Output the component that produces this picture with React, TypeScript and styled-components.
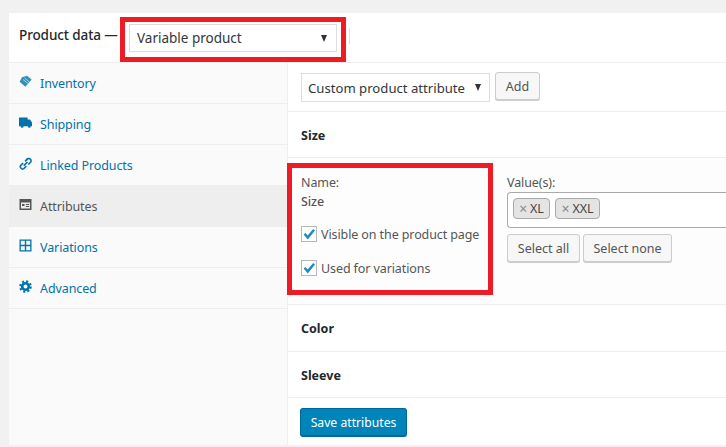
import React from "react";
import styled, { createGlobalStyle } from "styled-components";

const Global = createGlobalStyle`
  html, body { margin: 0; padding: 0; background: #f1f1f1; }
  body { width: 726px; height: 447px; overflow: hidden; font-family: "Noto Sans", "Open Sans", sans-serif; font-size: 13px; color: #32373c; }
  * { box-sizing: border-box; }
`;

const Page = styled.div`
  width: 726px;
  height: 447px;
  padding: 13px 0 2px 9px;
`;

const Panel = styled.div`
  height: 432px;
  background: #fff;
  display: flex;
  flex-direction: column;
  overflow: hidden;
`;

const Header = styled.div`
  height: 50px;
  flex: none;
  display: flex;
  align-items: center;
  padding-left: 10px;
  border-bottom: 1px solid #eee;
`;

const HeaderLabel = styled.span`
  font-size: 13.5px;
  font-weight: 500;
  color: #23282d;
  letter-spacing: -0.1px;
  width: 101px;
  white-space: nowrap;
  margin-top: -5px;
`;

const RedFrame = styled.div`
  border: 5px solid #ed1c24;
`;

const HeaderFrame = styled(RedFrame)`
  width: 226px;
  height: 45px;
  flex: none;
  align-self: flex-start;
  margin-top: 4px;
  padding: 2px 4px 5px 4px;
`;

const FakeSelect = styled.div`
  height: 100%;
  border: 1px solid #ddd;
  background: #fff;
  display: flex;
  align-items: center;
  justify-content: space-between;
  white-space: nowrap;
  color: #32373c;
`;

const HeaderSelect = styled(FakeSelect)`
  padding: 0 9px 0 7px;
  font-size: 13.5px;
`;

const Arrow = styled.span`
  width: 0;
  height: 0;
  border-left: 3.5px solid transparent;
  border-right: 3.5px solid transparent;
  border-top: 7px solid #333;
`;

const Divider = styled.span`
  width: 1px;
  height: 16px;
  background: #ddd;
  margin-left: 3px;
  margin-top: -3px;
`;

const Body = styled.div`
  flex: 1;
  display: flex;
  min-height: 0;
`;

const Sidebar = styled.nav`
  width: 279px;
  flex: none;
  background: #fafafa;
  border-right: 1px solid #eee;
`;

const Tab = styled.div<{ $active?: boolean }>`
  height: 41px;
  display: flex;
  align-items: center;
  padding: 1px 0 0 10px;
  gap: 8px;
  border-bottom: 1px solid #eee;
  background: ${(p) => (p.$active ? "#eee" : "transparent")};
  color: ${(p) => (p.$active ? "#555" : "#0073aa")};
  font-size: 12.5px;
  letter-spacing: -0.1px;
`;

const TabIcon = styled.svg`
  width: 13px;
  height: 13px;
  flex: none;
  fill: currentColor;
  margin-top: -4px;
`;

const Main = styled.div`
  flex: 1;
  min-width: 0;
  display: flex;
  flex-direction: column;
`;

const Toolbar = styled.div`
  height: 49px;
  flex: none;
  display: flex;
  align-items: flex-start;
  gap: 5px;
  padding: 10px 0 0 13px;
  border-bottom: 1px solid #eee;
`;

const AttrSelect = styled(FakeSelect)`
  width: 189px;
  height: 29px;
  padding: 0 8px 0 6px;
  font-size: 13.15px;
`;

const Button = styled.button<{ $w: number }>`
  font: inherit;
  font-size: 12.5px;
  color: #555;
  background: #f7f7f7;
  border: 1px solid #ccc;
  border-radius: 3px;
  box-shadow: 0 1px 0 #ccc;
  padding: 0;
  width: ${(p) => p.$w}px;
  height: 28px;
  white-space: nowrap;
`;

const AddButton = styled(Button)`
  margin-top: -1px;
`;

const Attr = styled.div<{ $h: number; $pt?: number }>`
  height: ${(p) => p.$h}px;
  flex: none;
  display: flex;
  align-items: center;
  padding: ${(p) => p.$pt ?? 0}px 0 0 13px;
  border-bottom: 1px solid #eee;
  font-weight: 700;
  font-size: 12.5px;
  color: #23282d;
`;

const Expanded = styled.div`
  height: 147px;
  flex: none;
  background: #fdfdfd;
  border-bottom: 1px solid #eee;
  display: flex;
  padding-top: 5px;
`;

const NameFrame = styled(RedFrame)`
  width: 206px;
  height: 132px;
  flex: none;
  margin-left: -1px;
  padding: 5px 0 0 9px;
  font-size: 12.5px;
  color: #555;
  letter-spacing: -0.1px;
  display: flex;
  flex-direction: column;
`;

const NameLabel = styled.div`
  height: 19px;
  line-height: 19px;
`;

const NameValue = styled.div`
  height: 19px;
  line-height: 19px;
  font-weight: 500;
  margin-bottom: 15px;
`;

const CheckRow = styled.label`
  display: flex;
  align-items: center;
  gap: 4px;
  height: 16px;
  margin-bottom: 18px;
  white-space: nowrap;
`;

const Box = styled.span`
  width: 16px;
  height: 16px;
  border: 1px solid #b4b9be;
  background: #fff;
  display: flex;
  align-items: center;
  justify-content: center;
  flex: none;
`;

const ValuesCol = styled.div`
  flex: 1;
  min-width: 0;
  padding: 12px 0 0 14px;
  font-size: 12.5px;
  color: #555;
`;

const ValuesLabel = styled.div`
  height: 16px;
  line-height: 16px;
  margin-bottom: 1px;
  letter-spacing: -0.1px;
`;

const TagField = styled.div`
  height: 36px;
  width: 240px;
  border: 1px solid #aaa;
  border-right: none;
  border-radius: 4px 0 0 4px;
  background: #fff;
  display: flex;
  align-items: flex-start;
  gap: 5px;
  padding: 5px 0 0 5px;
`;

const Tag = styled.span<{ $w: number }>`
  width: ${(p) => p.$w}px;
  height: 21px;
  display: flex;
  align-items: center;
  justify-content: center;
  gap: 3px;
  background: #e4e4e4;
  border: 1px solid #aaa;
  border-radius: 4px;
  color: #444;
  font-size: 12.5px;
  letter-spacing: -0.1px;
`;

const TagX = styled.span`
  color: #888;
  font-size: 14px;
`;

const ValueButtons = styled.div`
  display: flex;
  gap: 3px;
  margin-top: 6px;
`;

const Footer = styled.div`
  flex: 1;
  padding: 10px 0 0 12px;
`;

const SaveButton = styled.button`
  font: inherit;
  font-size: 12.2px;
  color: #fff;
  background: #0085ba;
  border: 1px solid #006799;
  border-bottom-width: 2px;
  border-radius: 3px;
  width: 107px;
  height: 29px;
  padding: 0;
  white-space: nowrap;
`;

const Check = () => (
  <svg width="14" height="13" viewBox="0 0 14 13">
    <path d="M1.6 6.6 L3.6 5 L5.6 7.6 L11.2 1 L13 2.4 L5.8 11.6 Z" fill="#1e8cbe" />
  </svg>
);

const icons: Record<string, React.ReactNode> = {
  Inventory: (
    <>
      <path d="M8 .8 12.6 4.400 6.400 11.800.6 6.800 3 2.200Z" opacity="0.8" />
      <path d="M4 4.500 8.800 8.400M5.500 3 10.200 6.800" stroke="#fff" strokeWidth="0.6" fill="none" />
    </>
  ),
  Shipping: (
    <path d="M0 1.500h8.600v2h2.400L13 6.500v3.700h-1.200a1.500 1.500 0 0 1-3 0H4.600a1.500 1.500 0 0 1-3 0H0Z" />
  ),
  "Linked Products": (
    <path fillRule="evenodd" d="M9.200.800a3 3 0 0 1 2.900 4.900L9.800 8 8.700 6.900l2.200-2.200a1.400 1.400 0 0 0-2-2L6.700 4.900 5.600 3.800 7.400 1.600A3 3 0 0 1 9.200.800ZM3.600 5.400 4.700 6.500 2.600 8.700a1.400 1.400 0 0 0 2 2L6.800 8.500 7.900 9.600 5.800 11.800A3 3 0 0 1 1.500 7.600ZM8 4.400 9.100 5.500 5.300 9.200 4.200 8.100Z" />
  ),
  Attributes: (
    <path fillRule="evenodd" d="M.5 1h12v11H.5Zm1.500 3.500v6h9v-6ZM3 6h2.500v2H3Zm3.800 0h3.400v1H6.800Zm0 2h3.400v1H6.800Z" />
  ),
  Variations: (
    <path fillRule="evenodd" d="M.5.500h12v12H.5Zm1.300 1.300v4h4v-4Zm5.400 0v4h4v-4ZM1.800 7.200v4h4v-4Zm5.400 0v4h4v-4Z" />
  ),
  Advanced: (
    <g fill="none" stroke="currentColor">
      <circle cx="6.500" cy="6.500" r="3.300" strokeWidth="2.600" />
      <circle cx="6.500" cy="6.500" r="5.300" strokeWidth="2" strokeDasharray="2.100 2.060" />
    </g>
  ),
};

const tabs = ["Inventory", "Shipping", "Linked Products", "Attributes", "Variations", "Advanced"];

export default function App() {
  return (
    <Page>
      <Global />
      <Panel>
        <Header>
          <HeaderLabel>Product data —</HeaderLabel>
          <HeaderFrame>
            <HeaderSelect>
              Variable product
              <Arrow />
            </HeaderSelect>
          </HeaderFrame>
          <Divider />
        </Header>
        <Body>
          <Sidebar>
            {tabs.map((t) => (
              <Tab key={t} $active={t === "Attributes"}>
                <TabIcon viewBox="0 0 13 13">{icons[t]}</TabIcon>
                {t}
              </Tab>
            ))}
          </Sidebar>
          <Main>
            <Toolbar>
              <AttrSelect>
                Custom product attribute
                <Arrow />
              </AttrSelect>
              <AddButton $w={45}>Add</AddButton>
            </Toolbar>
            <Attr $h={46} $pt={1}>Size</Attr>
            <Expanded>
              <NameFrame>
                <NameLabel>Name:</NameLabel>
                <NameValue>Size</NameValue>
                <CheckRow>
                  <Box><Check /></Box>
                  Visible on the product page
                </CheckRow>
                <CheckRow>
                  <Box><Check /></Box>
                  Used for variations
                </CheckRow>
              </NameFrame>
              <ValuesCol>
                <ValuesLabel>Value(s):</ValuesLabel>
                <TagField>
                  <Tag $w={37}><TagX>×</TagX>XL</Tag>
                  <Tag $w={45}><TagX>×</TagX>XXL</Tag>
                </TagField>
                <ValueButtons>
                  <Button $w={73}>Select all</Button>
                  <Button $w={89}>Select none</Button>
                </ValueButtons>
              </ValuesCol>
            </Expanded>
            <Attr $h={47}>Color</Attr>
            <Attr $h={46} $pt={1}>Sleeve</Attr>
            <Footer>
              <SaveButton>Save attributes</SaveButton>
            </Footer>
          </Main>
        </Body>
      </Panel>
    </Page>
  );
}
